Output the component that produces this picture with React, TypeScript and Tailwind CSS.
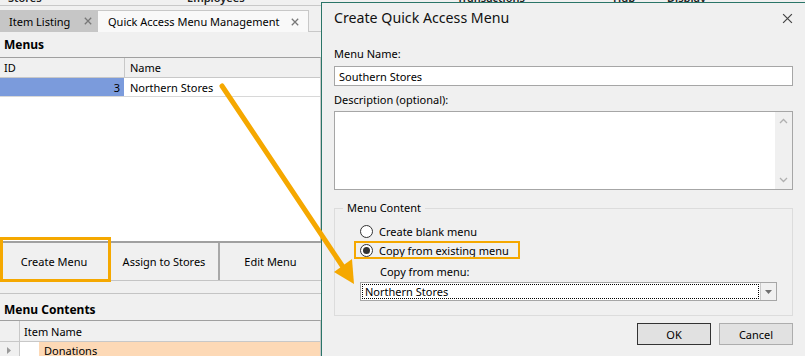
import React from "react";

function CloseX({ size = 10, color = "#6b6b6b", sw = 1.6 }: { size?: number; color?: string; sw?: number }) {
  return (
    <svg width={size} height={size} viewBox="0 0 10 10">
      <path d="M1 1 L9 9 M9 1 L1 9" stroke={color} strokeWidth={sw} fill="none" />
    </svg>
  );
}

function Radio({ checked }: { checked?: boolean }) {
  return (
    <div className="w-[13px] h-[13px] rounded-full border border-[#333] bg-white flex items-center justify-center shrink-0">
      {checked && <div className="w-[7px] h-[7px] rounded-full bg-[#333]" />}
    </div>
  );
}

export default function App() {
  return (
    <div className="relative w-[805px] h-[356px] overflow-hidden bg-[#f0f0f0] text-[11px] text-black font-['Noto_Sans',sans-serif] leading-none whitespace-nowrap">
      {/* Main app */}
      <div className="flex flex-col w-full">
        {/* clipped top strip */}
        <div className="h-[6px] overflow-hidden border-b border-[#c8c8c8] relative">
          <div className="flex -mt-[10px] h-[14px] items-center text-[11px] font-semibold text-[#222]">
            <span className="ml-[8px] w-[179px]">Stores</span>
            <span className="w-[270px]">Employees</span>
            <span className="w-[156px]">Transactions</span>
            <span className="w-[54px]">Hub</span>
            <span>Display</span>
          </div>
        </div>
        <div className="h-[4px]" />
        {/* tabs */}
        <div className="flex h-[22px]">
          <div className="w-[98px] bg-[#c6c6c6] flex items-center pl-[9px] pr-[6px] justify-between">
            <span>Item Listing</span>
            <CloseX size={8} color="#777" />
          </div>
          <div className="w-[211px] bg-[#f9f9f9] border-t border-r border-[#c8c8c8] flex items-center pl-[10px] pr-[9px] justify-between">
            <span>Quick Access Menu Management</span>
            <CloseX size={8} color="#777" />
          </div>
          <div className="flex-1 border-b border-[#c8c8c8]" />
        </div>
        {/* Left panel */}
        <div className="w-[321px] flex flex-col">
          <div className="h-[25px] flex items-center pl-[4px] font-bold text-[12px]">Menus</div>
          <div className="border-t border-[#a0a0a0] border-r border-r-[#c8c8c8] bg-white h-[184px] flex flex-col">
            <div className="flex h-[20px] bg-[#f0f0f0] border-b border-[#c8c8c8]">
              <div className="w-[125px] border-r border-[#c8c8c8] flex items-center pl-[4px]">ID</div>
              <div className="flex-1 flex items-center pl-[5px]">Name</div>
            </div>
            <div className="flex h-[19px] border-b border-[#d8d8d8]">
              <div className="w-[125px] bg-[#7b9bdc] flex items-center justify-end pr-[4px] border-r border-white">3</div>
              <div className="flex-1 flex items-center pl-[5px]">Northern Stores</div>
            </div>
          </div>
          {/* buttons */}
          <div className="flex h-[40px] border-t-2 border-[#a0a0a0] border-b border-b-[#c4c4c4]">
            <div className="w-[110px] flex items-center justify-center border-r-2 border-[#a8a8a8]">Create Menu</div>
            <div className="w-[110px] flex items-center justify-center border-r-2 border-[#a8a8a8]">Assign to Stores</div>
            <div className="flex-1 flex items-center justify-center">Edit Menu</div>
          </div>
          <div className="h-[13px] border-b border-[#c4c4c4]" />
          <div className="h-[26px] flex items-center pl-[4px] font-bold text-[12px] pt-[5px]">Menu Contents</div>
          <div className="border-t border-[#a0a0a0] border-r border-r-[#c8c8c8] flex flex-col">
            <div className="flex h-[21px] border-b border-[#c8c8c8]">
              <div className="w-[20px] border-r border-[#c8c8c8]" />
              <div className="flex-1 flex items-center pl-[4px]">Item Name</div>
            </div>
            <div className="flex h-[16px]">
              <div className="w-[20px] border-r border-[#c8c8c8] flex items-center justify-center">
                <svg width="5" height="7" viewBox="0 0 5 7"><path d="M0 0 L4 3.5 L0 7 Z" fill="#9a9a9a" /></svg>
              </div>
              <div className="w-[19px] bg-white" />
              <div className="flex-1 bg-[#fdd9b6] flex items-center pl-[5px]">Donations</div>
            </div>
          </div>
        </div>
      </div>

      {/* Dialog window */}
      <div className="absolute left-[321px] top-[2px] w-[490px] h-[360px] border border-[#2a7568] bg-[#f0f0f0] flex flex-col pl-[12px] pr-[17px]">
        <div className="h-[30px] flex items-center justify-between">
          <span className="text-[14.2px] text-[#111]">Create Quick Access Menu</span>
          <div><CloseX size={11} color="#444" sw={1.1} /></div>
        </div>
        <div className="mt-[12px] h-[16px] flex items-center">Menu Name:</div>
        <div className="mt-[5px] h-[20px] bg-white border border-[#a6a6a6] flex items-center pl-[4px]">Southern Stores</div>
        <div className="mt-[5px] h-[16px] flex items-center">Description (optional):</div>
        <div className="mt-[4px] h-[79px] bg-white border border-[#a6a6a6] flex justify-end">
          <div className="w-[17px] bg-[#f0f0f0] flex flex-col justify-between items-center py-[6px]">
            <svg width="9" height="6" viewBox="0 0 9 6"><path d="M1 5 L4.5 1.5 L8 5" stroke="#b0b0b0" strokeWidth="1.3" fill="none" /></svg>
            <svg width="9" height="6" viewBox="0 0 9 6"><path d="M1 1 L4.5 4.5 L8 1" stroke="#b0b0b0" strokeWidth="1.3" fill="none" /></svg>
          </div>
        </div>
        {/* Group box */}
        <div className="mt-[18px] h-[108px] border border-[#dcdcdc] relative pl-[25px] pr-[15px] flex flex-col">
          <div className="absolute -top-[10px] left-[8px] px-[4px] bg-[#f0f0f0] h-[16px] flex items-center">Menu Content</div>
          <div className="mt-[14px] h-[17px] flex items-center gap-[6px]">
            <Radio />
            <span>Create blank menu</span>
          </div>
          <div className="mt-[1px] h-[18px] flex items-center gap-[6px] relative">
            <Radio checked />
            <span>Copy from existing menu</span>
            <div className="absolute -left-[6px] top-[0px] w-[166px] h-[18px] border-2 border-[#f5a800]" />
          </div>
          <div className="mt-[4px] h-[16px] flex items-center pl-[20px]">Copy from menu:</div>
          <div className="mt-[3px] h-[19px] bg-white border border-[#a6a6a6] flex">
            <div className="flex-1 m-[1px] border border-dotted border-black flex items-center pl-[2px]">Northern Stores</div>
            <div className="w-[16px] border-l border-[#c8c8c8] bg-[#f0f0f0] flex items-center justify-center">
              <svg width="7" height="4" viewBox="0 0 7 4"><path d="M0 0 L7 0 L3.5 4 Z" fill="#707070" /></svg>
            </div>
          </div>
        </div>
        <div className="mt-[7px] flex justify-end gap-[8px]">
          <div className="w-[74px] h-[22px] border border-[#333] bg-[#e1e1e1] flex items-center justify-center">OK</div>
          <div className="w-[74px] h-[22px] border border-[#adadad] bg-[#e1e1e1] flex items-center justify-center">Cancel</div>
        </div>
      </div>

      {/* Annotation: Create Menu highlight */}
      <div className="absolute left-0 top-[237px] w-[111px] h-[45px] border-[3px] border-[#f5a800] pointer-events-none" />

      {/* Annotation arrow */}
      <svg className="absolute inset-0 pointer-events-none" width="805" height="356" viewBox="0 0 805 356">
        <line x1="222" y1="86" x2="343" y2="267" stroke="#f5a800" strokeWidth="5" strokeLinecap="round" />
        <polygon points="354,284 334,272 352,259" fill="#f5a800" />
      </svg>
    </div>
  );
}
